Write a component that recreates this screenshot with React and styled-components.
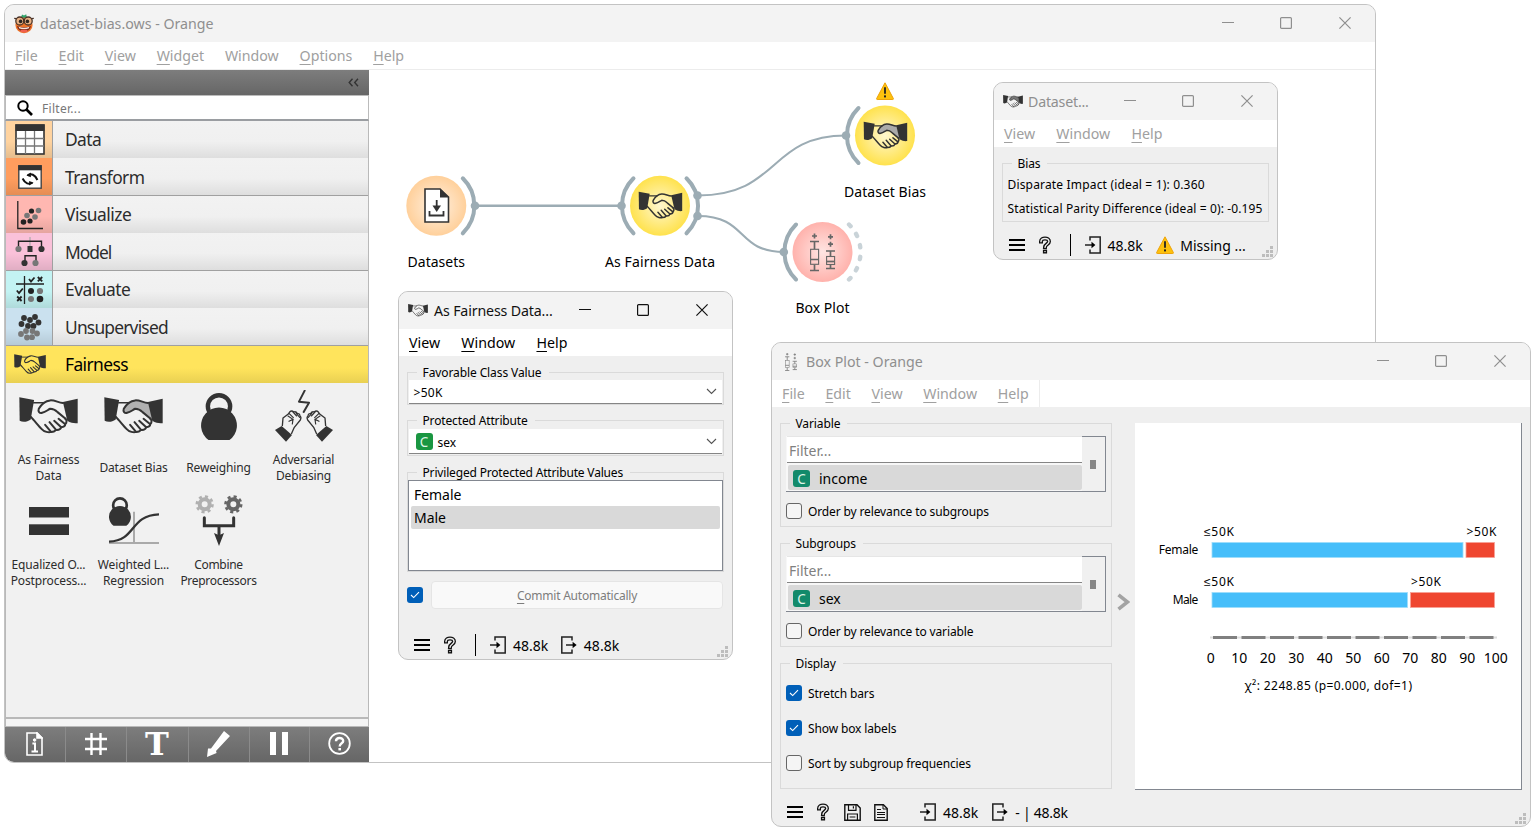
import React from "react";
import styled, { createGlobalStyle, css } from "styled-components";

const GlobalStyle = createGlobalStyle`
  * { box-sizing: border-box; }
  html, body { margin: 0; padding: 0; background: #fff; }
  body { width: 1533px; height: 830px; overflow: hidden; font-family: "Noto Sans", "Open Sans", sans-serif; color: #000; }
`;

/* ---------- window chrome ---------- */

const Desktop = styled.main`
  position: relative;
  width: 1533px;
  height: 830px;
  overflow: hidden;
`;

const WindowFrame = styled.section`
  position: absolute;
  left: ${(p) => p.$x}px;
  top: ${(p) => p.$y}px;
  width: ${(p) => p.$w}px;
  height: ${(p) => p.$h}px;
  display: flex;
  flex-direction: column;
  border: 1px solid #c3c3c3;
  border-radius: 10px;
  background: #efefef;
  overflow: hidden;
`;

const TitleBar = styled.header`
  flex: none;
  height: 37px;
  display: flex;
  align-items: center;
  padding: 0 1px 0 9px;
  background: #f3f3f3;
  color: ${(p) => (p.$active ? "#111" : "#8f8f8f")};
`;

const TitleIcon = styled.span`
  width: 20px;
  height: 20px;
  display: flex;
  align-items: center;
  justify-content: center;
  margin-right: ${(p) => p.$mr ?? 6}px;
`;

const TitleText = styled.h1`
  flex: 1;
  margin: 0;
  font-size: 14.2px;
  font-weight: 400;
  line-height: 20px;
  white-space: nowrap;
  letter-spacing: ${(p) => p.$ls || 0}px;
`;

const TitleButton = styled.span`
  width: 58.5px;
  height: 37px;
  padding-bottom: 1px;
  display: flex;
  align-items: center;
  justify-content: center;
`;

const MenuBar = styled.nav`
  flex: none;
  height: ${(p) => p.$h || 27}px;
  display: flex;
  background: #fff;
  border-bottom: ${(p) => (p.$line ? "1px solid #ececec" : "none")};
`;

const MenuGroup = styled.div`
  display: flex;
  align-items: center;
  gap: ${(p) => p.$gap}px;
  padding: 0 10px;
  border-right: ${(p) => (p.$divided ? "1px solid #ececec" : "none")};
`;

const MenuItem = styled.span`
  font-size: 14.2px;
  line-height: 20px;
  color: ${(p) => (p.$active ? "#000" : "#a0a0a0")};
`;

const Mnemonic = styled.span`
  text-decoration: underline;
  text-decoration-thickness: 1px;
  text-underline-offset: 3px;
`;

function WindowButtons() {
  return (
    <>
      <TitleButton>
        <svg width="12" height="12" stroke="currentColor"><path d="M0 5.5H12" /></svg>
      </TitleButton>
      <TitleButton>
        <svg width="12" height="12" stroke="currentColor" fill="none" strokeWidth="1.2"><rect x="0.6" y="0.6" width="10.8" height="10.8" rx="1" /></svg>
      </TitleButton>
      <TitleButton>
        <svg width="12" height="12" stroke="currentColor" strokeWidth="1.2"><path d="M0.4 0.4L11.6 11.6M11.6 0.4L0.4 11.6" /></svg>
      </TitleButton>
    </>
  );
}

function Menus({ items, active, divided, h, line, plain, gap }) {
  return (
    <MenuBar $h={h} $line={line}>
      <MenuGroup $divided={divided} $gap={gap}>
        {items.map((m) => (
          <MenuItem key={m} $active={active}>
            {m === plain ? m : <><Mnemonic>{m[0]}</Mnemonic>{m.slice(1)}</>}
          </MenuItem>
        ))}
      </MenuGroup>
    </MenuBar>
  );
}

/* ---------- icons ---------- */

function HandshakeArt({ shade, ink = "#333" }) {
  return (
    <g fill="none" stroke={ink} strokeWidth="6" strokeLinecap="round" strokeLinejoin="round">
      {shade && (
        <path d="M132 17C115 15 106 8 92 9C80 10 66 20 58 34C55 42 60 48 68 46C78 44 84 38 92 34C102 34 108 38 114 44L140 68L144 62Z" fill={shade} stroke="none" />
      )}
      <path d="M0 0L44 8L34 66C22 75 9 74 1 70Z" fill={ink} stroke="none" />
      <path d="M174 4L130 14L143 70C154 77 165 78 174 77Z" fill={ink} stroke="none" />
      <path d="M43 16H74" strokeWidth="5" />
      <path d="M130 17C115 15 105 8 92 9C80 10 66 20 58 34C55 42 60 48 68 46C78 44 84 38 92 34C102 34 108 38 114 44L138 64" />
      <path d="M34 58C42 66 58 86 66 94C74 103 88 106 95 103C101 103 107 101 109 97C117 98 123 95 125 89C132 89 137 85 137 79C142 76 142 68 137 64" />
      <path d="M77 82L94 102M90 74L109 96M104 70L125 89M117 64L137 80" />
    </g>
  );
}

function Handshake({ w, shade, ink }) {
  return (
    <svg width={w} height={w * 0.632} viewBox="-1 -1 176 111">
      <HandshakeArt shade={shade} ink={ink} />
    </svg>
  );
}

function BoxPlotArt({ color }) {
  return (
    <g fill="none" stroke={color} strokeWidth="1.7">
      <path d="M5.5 0V5M3 2.5H8M1 8H10M5.5 8V15.5M5.5 31V36.5M1 37H10" />
      <rect x="1.6" y="15.8" width="8" height="15" strokeWidth="1.1" />
      <path d="M1.5 26H9.5M21.5 0.8V5.8M19 3.3H24M21.5 8.2V13.2M19 10.7H24M17 17.5H26M21.5 17.5V22.8M21.5 31V35M17 35H26" />
      <rect x="17.6" y="23" width="8" height="8" strokeWidth="1.1" />
      <path d="M17.5 28H25.5" />
    </g>
  );
}

function OrangeLogo() {
  return (
    <svg width="20" height="20" viewBox="0 0 20 20">
      <ellipse cx="10" cy="11" rx="8.6" ry="8.2" fill="#ee7228" />
      <path d="M7.2 3L8 0.5L10 1.5L12.2 0.3L12.8 3L10 4Z" fill="#2fa36b" />
      <circle cx="5.8" cy="7" r="4" fill="#e9b184" stroke="#4a3428" strokeWidth="1.3" />
      <circle cx="14.2" cy="7" r="4" fill="#e9b184" stroke="#4a3428" strokeWidth="1.3" />
      <path d="M0.2 4.4L2.6 4.6M17.4 4.6L19.8 4.4M9 6.4H11" stroke="#4a3428" strokeWidth="1.3" />
      <circle cx="6.6" cy="7.4" r="1.8" fill="#2e2520" />
      <circle cx="13.4" cy="7.4" r="1.8" fill="#2e2520" />
      <path d="M3 12C7 13.6 13 13.6 17 12C16 16.2 13 17.6 10 17.6C7 17.6 4 16.2 3 12Z" fill="#7a2a1c" />
      <path d="M4.6 12.8C8 14 12 14 15.4 12.8L14.6 14.4C12 15.2 8 15.2 5.4 14.4Z" fill="#f6e6dc" />
      <ellipse cx="10" cy="17" rx="3.6" ry="1.4" fill="#f0604f" />
    </svg>
  );
}

function WarningArt() {
  return (
    <>
      <path d="M9 0.8L17.4 16.6Q17.6 17.4 16.8 17.5H1.2Q0.4 17.4 0.6 16.6Z" fill="#fdc10d" stroke="#eda30b" strokeWidth="1" strokeLinejoin="round" />
      <path d="M9 5.2V11.8" stroke="#222" strokeWidth="1.8" />
      <rect x="8" y="13.4" width="2" height="2" fill="#222" />
    </>
  );
}

const HamburgerIcon = () => (
  <svg width="16" height="14" stroke="#000" strokeWidth="2.1"><path d="M0 2H16M0 7H16M0 12H16" /></svg>
);

const HelpIcon = () => (
  <svg width="14" height="18" viewBox="0 0 14 18" fill="none">
    <path d="M3 5.6C3 1.4 11 1.4 11 5.6C11 8.2 7.2 8.2 7 11.2" stroke="#111" strokeWidth="4" strokeLinecap="square" />
    <path d="M3 5.6C3 1.4 11 1.4 11 5.6C11 8.2 7.2 8.2 7 11.2" stroke="#efefef" strokeWidth="1.4" strokeLinecap="square" />
    <rect x="5.6" y="14.4" width="2.8" height="2.4" fill="#efefef" stroke="#111" strokeWidth="1.4" />
  </svg>
);

const InputIcon = () => (
  <svg width="16" height="18" fill="none" stroke="#222" strokeWidth="1.5">
    <path d="M5 4.5V1H15.2V17H5V13.5" />
    <path d="M0 9H8" />
    <path d="M6.5 5.8L10.4 9L6.5 12.2Z" fill="#000" stroke="none" />
  </svg>
);

const OutputIcon = () => (
  <svg width="16" height="18" fill="none" stroke="#222" strokeWidth="1.5">
    <path d="M11 4.5V1H0.8V17H11V13.5" />
    <path d="M5 9H13" />
    <path d="M11.6 5.8L15.6 9L11.6 12.2Z" fill="#000" stroke="none" />
  </svg>
);

const SaveIcon = () => (
  <svg width="17" height="17" fill="none" stroke="#111" strokeWidth="1.4">
    <path d="M0.8 0.8H13L16.2 4V16.2H0.8Z" />
    <path d="M4.5 1V6.4H12V1M9.4 2.2V4.6M3.6 16V10H13.4V16M5.6 13H11.4" strokeWidth="1.2" />
  </svg>
);

const ReportIcon = () => (
  <svg width="14" height="17" fill="none" stroke="#111" strokeWidth="1.4">
    <path d="M0.8 0.8H9.4L13.2 4.6V16.2H0.8Z" />
    <path d="M9 1V5H13M3 5.5H7M3 8.5H11M3 10.5H11M3 13.5H11" strokeWidth="1" />
  </svg>
);

const GripIcon = () => (
  <svg width="12" height="12" fill="#bdbdbd">
    <path d="M8 0h3v3h-3zM4 4h3v3h-3zM8 4h3v3h-3zM0 8h3v3h-3zM4 8h3v3h-3zM8 8h3v3h-3z" />
  </svg>
);

/* ---------- form parts ---------- */

const Group = styled.fieldset`
  min-width: 0;
  height: ${(p) => p.$h}px;
  margin: 0 0 ${(p) => p.$gap || 0}px;
  padding: ${(p) => p.$top || 0}px ${(p) => p.$side || 0}px 0;
  border: 1px solid #dadada;
`;

const GroupTitle = styled.legend`
  height: 16px;
  margin-left: ${(p) => 8.5 - (p.$inset || 0)}px;
  padding: 0 7px 0 6px;
  font-size: 12px;
  line-height: 18px;
  letter-spacing: ${(p) => p.$ls ?? -0.1}px;
`;

const Combo = styled.div`
  height: ${(p) => p.$h}px;
  margin: ${(p) => p.$mt || 0}px 1px 0;
  padding: 0 5px 0 ${(p) => p.$left || 4.5}px;
  display: flex;
  align-items: center;
  gap: 5px;
  background: #fff;
  border-bottom: 1px solid #858585;
  font-size: 12px;
  letter-spacing: ${(p) => p.$ls || 0}px;
`;

const ComboText = styled.span`
  flex: 1;
  padding-top: 2px;
`;

const ChevronDown = () => (
  <svg width="11" height="7" fill="none" stroke="#555" strokeWidth="1.1"><path d="M1 1L5.5 5.5L10 1" /></svg>
);

const TypeBadge = styled.span`
  width: 17px;
  height: 17px;
  border-radius: 3px;
  background: ${(p) => p.$color};
  color: #dff5e8;
  font-size: 13.5px;
  line-height: 18px;
  text-align: center;
`;

const CheckMark = styled.span`
  flex: none;
  width: 16px;
  height: 16px;
  display: flex;
  align-items: center;
  justify-content: center;
  border-radius: 3px;
  ${(p) => p.$on
    ? css`background: #005fb8;`
    : css`background: #f5f5f5; border: 1px solid #666;`}
`;

const CheckRow = styled.label`
  height: 16px;
  display: flex;
  align-items: center;
  gap: 6px;
  margin-top: ${(p) => p.$mt || 0}px;
`;

const CheckText = styled.span`
  padding-top: 1px;
  font-size: 12px;
  line-height: 16px;
  letter-spacing: -0.13px;
  white-space: nowrap;
`;

function Check({ on }) {
  return (
    <CheckMark $on={on}>
      {on && <svg width="10" height="8" fill="none" stroke="#fff" strokeWidth="1.1"><path d="M1 4L3.7 6.6L9 1.2" /></svg>}
    </CheckMark>
  );
}

const StatusBar = styled.footer`
  flex: none;
  height: ${(p) => p.$h}px;
  display: flex;
  align-items: center;
  padding-left: ${(p) => p.$left}px;
  font-size: 14px;
  line-height: 20px;
`;

const StatusItem = styled.span`
  display: flex;
  align-items: center;
  gap: ${(p) => p.$gap || 0}px;
  margin-right: ${(p) => p.$mr || 0}px;
  white-space: nowrap;
`;

const StatusText = styled.span`
  padding-top: 1px;
  letter-spacing: ${(p) => p.$ls || 0}px;
`;

const StatusDivider = styled.span`
  width: 1px;
  height: 22px;
  margin-right: ${(p) => p.$mr}px;
  background: #000;
`;

const Grip = styled.span`
  margin-left: auto;
  align-self: flex-end;
  display: flex;
  padding: 0 3px 1px 0;
`;

/* ---------- sidebar ---------- */

const MainBody = styled.div`
  flex: 1;
  min-height: 0;
  display: flex;
  background: #fff;
`;

const Sidebar = styled.aside`
  flex: none;
  width: 364px;
  display: flex;
  flex-direction: column;
`;

const SidebarHeader = styled.div`
  height: 25px;
  display: flex;
  align-items: center;
  justify-content: flex-end;
  padding-right: 10px;
  background: linear-gradient(#7d7d7d, #666);
`;

const FilterRow = styled.div`
  height: 26px;
  display: flex;
  align-items: center;
  gap: 9px;
  padding-left: 11px;
  background: #fff;
  border: 1px solid #bbb;
  border-bottom: 2px solid #9a9da1;
`;

const FilterText = styled.span`
  padding-top: 1px;
  font-size: 12px;
  letter-spacing: 0.3px;
  color: #777;
`;

const PanelBody = styled.div`
  flex: 1;
  border: solid #b9b9b9;
  border-width: 0 1px 2px;
  background: #f1f1f1;
`;

const Category = styled.div`
  height: ${(p) => (p.$ruled ? 38 : 37)}px;
  display: flex;
  border-bottom: ${(p) => (p.$ruled ? "1px solid #a0a0a0" : "none")};
  background: ${(p) => (p.$open
    ? "linear-gradient(#ffe45c 60%, #e9d052)"
    : "linear-gradient(#f2f2f2, #f0f0f0 55%, #dedede)")};
`;

const CategoryIcon = styled.span`
  width: 47px;
  padding-left: ${(p) => (p.$open ? 0 : 2)}px;
  display: flex;
  align-items: center;
  justify-content: center;
  border-right: ${(p) => (p.$open ? "0" : "1px solid #a0a0a0")};
  background: ${(p) => (p.$open ? "none" : `linear-gradient(transparent 55%, rgba(0,0,0,.1)), ${p.$color}`)};
`;

const CategoryName = styled.span`
  padding-left: 12px;
  font-size: 17.4px;
  line-height: ${(p) => (p.$ruled ? 38 : 37)}px;
  letter-spacing: ${(p) => p.$ls}px;
  color: ${(p) => (p.$open ? "#000" : "#2c2c2c")};
`;

const WidgetGrid = styled.div`
  display: grid;
  grid-template-columns: repeat(4, 85px);
  grid-auto-rows: 104.7px;
`;

const WidgetCell = styled.div`
  display: flex;
  flex-direction: column;
  align-items: center;
`;

const WidgetIcon = styled.span`
  height: 69px;
  display: flex;
  align-items: center;
  padding-bottom: 3px;
`;

const WidgetName = styled.span`
  height: 32px;
  display: flex;
  align-items: center;
  text-align: center;
  white-space: pre;
  font-size: 12px;
  line-height: 16px;
  letter-spacing: ${(p) => p.$ls || -0.14}px;
  color: #2c2c2c;
`;

const PanelStrip = styled.div`
  height: 8px;
  background: #f4f4f4;
  border: 1px solid #b9b9b9;
  border-top: 0;
`;

const ToolStrip = styled.div`
  height: 35px;
  display: grid;
  grid-template-columns: 61px 61px 62px 61px 60px 1fr;
  background: linear-gradient(#7d7d7d, #666);
`;

const Tool = styled.span`
  display: flex;
  align-items: center;
  justify-content: center;
  padding: 0 1px 2px 0;
  border-right: 1px solid #8b8b8b;
  &:last-child { border-right: 0; }
`;

const ToolGlyph = styled.b`
  color: #fff;
  font: 700 32px/30px "DejaVu Serif", serif;
`;

const DataIcon = () => (
  <svg width="30" height="31" viewBox="0 0 30 31">
    <rect x="1" y="1" width="28" height="29" fill="#fff" stroke="#333" strokeWidth="1.6" />
    <rect x="0.5" y="0.5" width="29" height="6.5" fill="#333" />
    <path d="M10.5 7V30M19.5 7V30M1 14.5H29M1 22H29" stroke="#777" strokeWidth="1.3" />
  </svg>
);
const TransformIcon = () => (
  <svg width="24" height="24" viewBox="0 0 24 24">
    <rect x="0.8" y="0.8" width="22.4" height="22.4" fill="#fff" stroke="#444" strokeWidth="1.4" />
    <rect x="0.3" y="0.3" width="23.4" height="5" fill="#333" />
    <path d="M9.5 10.5C13 8 17 9.5 19.4 15M14.5 17.5C11 20 7 18.5 4.6 13.5" fill="none" stroke="#111" strokeWidth="2" />
    <path d="M8.4 10.4L13 7.4L12.8 12.2ZM15.6 17.8L11 20.6L11.2 16Z" fill="#111" />
  </svg>
);
const VisualizeIcon = () => (
  <svg width="28" height="30" viewBox="0 0 28 30">
    <path d="M1.8 1V28.5H27" fill="none" stroke="#222" strokeWidth="1.3" />
    <g fill="#222"><circle cx="7.5" cy="22" r="2.8" /><circle cx="14" cy="21" r="2.6" /><circle cx="15.5" cy="11" r="2.6" /></g>
    <g fill="#777"><circle cx="11" cy="15.5" r="2.8" /><circle cx="19" cy="17" r="2.8" /><circle cx="22.5" cy="10.5" r="2.8" /></g>
  </svg>
);
const ModelIcon = () => (
  <svg width="30" height="30" viewBox="0 0 30 30">
    <path d="M15 0V12" stroke="#aaa" strokeWidth="1.2" />
    <path d="M3.5 10V4.2H26.5V10M10 24V18.8H21V24" fill="none" stroke="#222" strokeWidth="1.4" />
    <g fill="#333"><circle cx="26.5" cy="12" r="3.1" /><circle cx="9.5" cy="26" r="3.1" /><rect x="12.5" y="9" width="5" height="6" /></g>
    <g fill="#777"><circle cx="3.5" cy="12" r="3.1" /><circle cx="20.5" cy="26" r="3.1" /></g>
  </svg>
);
const EvaluateIcon = () => (
  <svg width="30" height="30" viewBox="0 0 30 30" fill="none" stroke="#222" strokeWidth="1.3">
    <path d="M9.5 1V29M1 9H29" />
    <path d="M14 4L16 6.5L19.5 2.5M1.8 15.5L4 18L7.8 13.5M22.8 2L27.2 6.4M27.2 2L22.8 6.4M2.2 21.5L6.6 26M6.6 21.5L2.2 26" strokeWidth="1.8" />
    <g stroke="none"><circle cx="16" cy="16" r="3" fill="#222" /><circle cx="25" cy="24" r="3.3" fill="#222" /><circle cx="25" cy="16" r="3.1" fill="#777" /><circle cx="16" cy="24" r="3" fill="#777" /></g>
  </svg>
);
const UnsupervisedIcon = () => (
  <svg width="24" height="28" viewBox="0 0 24 28">
    <g fill="#333">{[[6, 5], [17, 4], [3.5, 11], [12, 7], [20.5, 9.5], [10, 13], [15.5, 13]].map(([x, y]) => <circle key={x} cx={x} cy={y} r="2.9" />)}</g>
    <g fill="#777">{[[3, 21], [8, 18], [14.5, 18], [19, 20.5], [9, 24.5], [14, 24.2]].map(([x, y]) => <circle key={x} cx={x} cy={y} r="2.9" />)}</g>
  </svg>
);

const KettlebellArt = () => (
  <>
    <circle cx="53" cy="39.5" r="33" fill="none" stroke="#333" strokeWidth="13" />
    <path d="M22 139A53 53 0 1 1 84 139Z" fill="#333" />
  </>
);
const ReweighingIcon = () => (
  <svg width="36" height="47" viewBox="0 0 106 139"><KettlebellArt /></svg>
);

const FistArt = () => (
  <g>
    <path d="M0 120L20 108L51 135L33 155Z" fill="#333" />
    <path d="M22 108L24 84L40 72L44 66Q50 60 56 66Q63 63 67 71Q74 69 75 78Q80 82 76 90L58 112L49 132" fill="none" stroke="#333" strokeWidth="4" strokeLinejoin="round" />
    <path d="M42 70L55 83M54 66L65 78M64 70L74 82M39 78L54 88L42 94M54 88L52 102" fill="none" stroke="#333" strokeWidth="3.5" strokeLinecap="round" />
  </g>
);
const AdversarialIcon = () => (
  <svg width="58" height="52" viewBox="0 0 174 156">
    <path d="M89 2L72 35L102 38L86 66" fill="none" stroke="#333" strokeWidth="6" strokeLinejoin="round" strokeLinecap="round" />
    <FistArt />
    <g transform="matrix(-1 0 0 1 174 0)"><FistArt /></g>
  </svg>
);
const EqualIcon = () => (
  <svg width="40" height="28" fill="#333"><rect width="40" height="10.5" /><rect y="17.3" width="40" height="10.7" /></svg>
);
const WeightedIcon = () => (
  <svg width="50" height="48" viewBox="0 0 150 144">
    <path d="M0 138H150M75 44V138" stroke="#aaa" strokeWidth="6" />
    <path d="M0 134C84 130 60 56 150 52" fill="none" stroke="#333" strokeWidth="7" />
    <g transform="scale(.62)"><KettlebellArt /></g>
  </svg>
);
const Gear = ({ x, color }) => (
  <g transform={`translate(${x} 28)`} fill="none" stroke={color}>
    <circle r="15" strokeWidth="12" />
    <circle r="23.5" strokeWidth="8" strokeDasharray="9.2 9.26" />
  </g>
);
const CombineIcon = () => (
  <svg width="48" height="52" viewBox="0 0 144 156">
    <Gear x={29} color="#b0b0b0" />
    <Gear x={115} color="#666" />
    <path d="M28 68V92H116V68M72 92V125" fill="none" stroke="#333" strokeWidth="9" strokeLinecap="round" />
    <path d="M57 114L72 121L87 114L72 153Z" fill="#333" />
  </svg>
);

const categories = [
  { name: "Data", color: "#ffd39f", icon: <DataIcon />, ls: -0.6 },
  { name: "Transform", color: "#ff9d5e", icon: <TransformIcon />, ruled: true, ls: -0.55 },
  { name: "Visualize", color: "#ffb7b1", icon: <VisualizeIcon />, ls: -0.5 },
  { name: "Model", color: "#fac1d9", icon: <ModelIcon />, ruled: true, ls: -1 },
  { name: "Evaluate", color: "#c3f3f3", icon: <EvaluateIcon />, ls: -0.5 },
  { name: "Unsupervised", color: "#cae1ef", icon: <UnsupervisedIcon />, ruled: true, ls: -0.8 },
  { name: "Fairness", open: true, icon: <Handshake w={32} />, ls: -0.6 },
];

const widgets = [
  { name: "As Fairness\nData", icon: <Handshake w={59} /> },
  { name: "Dataset Bias", icon: <Handshake w={59} shade="#b0b0b0" /> },
  { name: "Reweighing", icon: <ReweighingIcon /> },
  { name: "Adversarial\nDebiasing", icon: <AdversarialIcon /> },
  { name: "Equalized O...\nPostprocess...", icon: <EqualIcon /> },
  { name: "Weighted L...\nRegression", icon: <WeightedIcon /> },
  { name: "Combine\nPreprocessors", icon: <CombineIcon />, ls: -0.3 },
];

function ToolIcons() {
  const s = { fill: "none", stroke: "#fff" };
  return (
    <ToolStrip>
      <Tool>
        <svg width="17" height="24" {...s} strokeWidth="1.6">
          <path d="M1 1H11L16 6V23H1Z" /><path d="M11 1V6H16Z" fill="#fff" />
          <path d="M6.4 11.5H9V19M5.5 19.4H12" strokeWidth="2" /><circle cx="8.6" cy="8" r="1.3" fill="#fff" strokeWidth="1" />
        </svg>
      </Tool>
      <Tool><svg width="24" height="24" {...s} strokeWidth="2.4"><path d="M7.5 1V23M16.5 1V23M1 7H23M1 17H23" /></svg></Tool>
      <Tool><ToolGlyph>T</ToolGlyph></Tool>
      <Tool><svg width="23" height="26" fill="#fff"><path d="M17 0L23 5L9 20L9.6 22L0 26L1 17.5L4 17.6Z" /></svg></Tool>
      <Tool><svg width="18" height="23" fill="#fff"><rect width="6" height="23" /><rect x="12" width="6" height="23" /></svg></Tool>
      <Tool>
        <svg width="23" height="23" {...s} strokeWidth="1.8">
          <circle cx="11.5" cy="11.5" r="10.3" /><path d="M8 9.2C8 5 15.2 5 15.2 9C15.2 11.4 11.7 11.2 11.7 14.4" strokeWidth="2.4" />
          <path d="M10.4 17.2H13" strokeWidth="2.4" />
        </svg>
      </Tool>
    </ToolStrip>
  );
}

/* ---------- workflow canvas ---------- */

const CanvasArea = styled.div`
  flex: 1;
  min-width: 0;
  overflow: hidden;
`;

const wire = "#9cacb4";
const arc = (x, y, side) => {
  const dx = 26.5 * side;
  return `M${x + dx} ${y - 27.5}A38.5 38.5 0 0 ${side > 0 ? 1 : 0} ${x + dx} ${y + 27.5}`;
};

function Node({ x, y, fill, label, w, left, right, dashed, children }) {
  return (
    <g>
      <circle cx={x} cy={y} r="30" fill={`url(#${fill})`} />
      <g fill="none" stroke={wire} strokeWidth="4" strokeLinecap="round">
        {left && <path d={arc(x, y, -1)} />}
        {right && <path d={arc(x, y, 1)} />}
        {dashed && <path d={arc(x, y, 1)} stroke="#c9d3d8" strokeWidth="4.4" strokeDasharray="2.4 9.4" />}
      </g>
      {children}
      <text x={x} y={y + 61} fontSize="14" textAnchor="middle" textLength={w}>{label}</text>
    </g>
  );
}

function Workflow() {
  return (
    <svg width="1006" height="692" viewBox="369 70 1006 692" fontFamily="'Noto Sans', sans-serif">
      <defs>
        <radialGradient id="peach"><stop offset="0" stopColor="#fff1e2" /><stop offset="1" stopColor="#ffd09b" /></radialGradient>
        <radialGradient id="yellow"><stop offset="0" stopColor="#fff7cf" /><stop offset="1" stopColor="#ffe24d" /></radialGradient>
        <radialGradient id="rose"><stop offset="0" stopColor="#ffe5e3" /><stop offset="1" stopColor="#ffb2ac" /></radialGradient>
      </defs>
      <g fill="none" stroke={wire} strokeWidth="2.1">
        <path d="M475 205.7H621" strokeWidth="2.4" />
        <path d="M698 195.5C780 195.5 768 135.5 846 135.5" />
        <path d="M698 216C748 216 736 252 784 252" />
      </g>
      <Node x={436.3} y={205.8} fill="peach" label="Datasets" w={57.5} right>
        <path d="M425 189H440L448.5 197V222H425Z" fill="#fff" stroke="#333" strokeWidth="1.6" />
        <path d="M440 188.5L449 197.5H440Z" fill="#333" />
        <path d="M436.7 200V208M429.5 211V215.5H443.5V211" fill="none" stroke="#333" strokeWidth="1.8" />
        <path d="M432.5 205.5H441L436.7 212Z" fill="#333" />
      </Node>
      <Node x={660} y={205.8} fill="yellow" label="As Fairness Data" w={110} left right>
        <g transform="translate(638.7 191.8) scale(.25)"><HandshakeArt /></g>
      </Node>
      <Node x={885} y={135.5} fill="yellow" label="Dataset Bias" w={82} left>
        <g transform="translate(863.7 121.8) scale(.25)"><HandshakeArt shade="#aaa" /></g>
      </Node>
      <Node x={822.5} y={252} fill="rose" label="Box Plot" w={54} left dashed>
        <g transform="translate(809 233.5)"><BoxPlotArt color="#666" /></g>
      </Node>
      <g fill={wire}>
        {[[475, 205.8], [621.5, 205.8], [697.5, 195.5], [697.5, 216], [846, 135.5], [783.8, 252]].map(([x, y]) => (
          <circle key={`${x}-${y}`} cx={x} cy={y} r="4.3" />
        ))}
      </g>
      <g transform="translate(876 82)"><WarningArt /></g>
    </svg>
  );
}

/* ---------- windows ---------- */

function MainWindow() {
  return (
    <WindowFrame $x={4} $y={4} $w={1372} $h={759}>
      <TitleBar>
        <TitleIcon><OrangeLogo /></TitleIcon>
        <TitleText>dataset-bias.ows - Orange</TitleText>
        <WindowButtons />
      </TitleBar>
      <Menus items={["File", "Edit", "View", "Widget", "Window", "Options", "Help"]} plain="Window" h={28} gap={20.83} line />
      <MainBody>
        <Sidebar>
          <SidebarHeader>
            <svg width="11" height="9" fill="none" stroke="#333" strokeWidth="1.4"><path d="M4.5 0.8L1.2 4.5L4.5 8.2M10 0.8L6.7 4.5L10 8.2" /></svg>
          </SidebarHeader>
          <FilterRow>
            <svg width="16" height="16" fill="none" stroke="#000"><circle cx="6" cy="6" r="4.7" strokeWidth="2" /><path d="M9.5 9.5L15 15" strokeWidth="2.6" /></svg>
            <FilterText>Filter...</FilterText>
          </FilterRow>
          <PanelBody>
            {categories.map((c) => (
              <Category key={c.name} $ruled={c.ruled} $open={c.open}>
                <CategoryIcon $color={c.color} $open={c.open}>{c.icon}</CategoryIcon>
                <CategoryName $ruled={c.ruled} $open={c.open} $ls={c.ls}>{c.name}</CategoryName>
              </Category>
            ))}
            <WidgetGrid>
              {widgets.map((w) => (
                <WidgetCell key={w.name}>
                  <WidgetIcon>{w.icon}</WidgetIcon>
                  <WidgetName $ls={w.ls}>{w.name}</WidgetName>
                </WidgetCell>
              ))}
            </WidgetGrid>
          </PanelBody>
          <PanelStrip />
          <ToolIcons />
        </Sidebar>
        <CanvasArea><Workflow /></CanvasArea>
      </MainBody>
    </WindowFrame>
  );
}

const DialogBody = styled.div`
  flex: 1;
  padding: 8px 8px 0;
`;

const ValueList = styled.div`
  height: 91px;
  padding: 2px;
  background: #fff;
  border: 1px solid #828790;
`;

const ValueItem = styled.div`
  height: 23px;
  padding-left: 3px;
  border-radius: 2px;
  background: ${(p) => (p.$selected ? "#d9d9d9" : "none")};
  font-size: 14px;
  line-height: 23px;
  letter-spacing: -0.05px;
`;

const CommitRow = styled.div`
  display: flex;
  align-items: center;
  gap: 8px;
  margin: 9px 1px 0 0;
`;

const CommitButton = styled.button`
  flex: 1;
  height: 28px;
  padding: 0;
  border: 1px solid #e5e5e5;
  border-radius: 4px;
  background: #f9f9f9;
  color: #7d7d7d;
  font-family: inherit;
  font-size: 12px;
  letter-spacing: -0.23px;
`;

function FairnessWindow() {
  return (
    <WindowFrame $x={398} $y={291} $w={335} $h={369}>
      <TitleBar $active>
        <TitleIcon><Handshake w={20} /></TitleIcon>
        <TitleText $ls={-0.14}>As Fairness Data...</TitleText>
        <WindowButtons />
      </TitleBar>
      <Menus items={["View", "Window", "Help"]} active gap={21.3} />
      <DialogBody>
        <Group $h={41} $gap={7}>
          <GroupTitle>Favorable Class Value</GroupTitle>
          <Combo $h={24} $ls={0.3}><ComboText>&gt;50K</ComboText><ChevronDown /></Combo>
        </Group>
        <Group $h={44} $gap={8}>
          <GroupTitle $ls={-0.15}>Protected Attribute</GroupTitle>
          <Combo $h={25} $mt={1} $left={6.5}><TypeBadge $color="#1a9641">C</TypeBadge><ComboText>sex</ComboText><ChevronDown /></Combo>
        </Group>
        <Group $h={108}>
          <GroupTitle $ls={-0.17}>Privileged Protected Attribute Values</GroupTitle>
          <ValueList>
            <ValueItem>Female</ValueItem>
            <ValueItem $selected>Male</ValueItem>
          </ValueList>
        </Group>
        <CommitRow>
          <Check on />
          <CommitButton><Mnemonic>C</Mnemonic>ommit Automatically</CommitButton>
        </CommitRow>
      </DialogBody>
      <StatusBar $h={28} $left={15}>
        <StatusItem $mr={13}><HamburgerIcon /></StatusItem>
        <StatusItem $mr={18}><HelpIcon /></StatusItem>
        <StatusDivider $mr={14} />
        <StatusItem $gap={7} $mr={13}><InputIcon /><StatusText>48.8k</StatusText></StatusItem>
        <StatusItem $gap={6.6}><OutputIcon /><StatusText>48.8k</StatusText></StatusItem>
        <Grip><GripIcon /></Grip>
      </StatusBar>
    </WindowFrame>
  );
}

const BiasLine = styled.p`
  margin: 0;
  font-size: 12px;
  line-height: 24px;
  letter-spacing: ${(p) => p.$ls}px;
  white-space: nowrap;
`;

function BiasWindow() {
  return (
    <WindowFrame $x={993} $y={82} $w={285} $h={178}>
      <TitleBar>
        <TitleIcon $mr={5}><Handshake w={20} shade="#777" /></TitleIcon>
        <TitleText $ls={-0.2}>Dataset...</TitleText>
        <WindowButtons />
      </TitleBar>
      <Menus items={["View", "Window", "Help"]} gap={21.3} />
      <DialogBody>
        <Group $h={67} $top={2} $side={4.5}>
          <GroupTitle $inset={4.5}>Bias</GroupTitle>
          <BiasLine $ls={0.17}>Disparate Impact (ideal = 1): 0.360</BiasLine>
          <BiasLine $ls={0.12}>Statistical Parity Difference (ideal = 0): -0.195</BiasLine>
        </Group>
      </DialogBody>
      <StatusBar $h={28} $left={15}>
        <StatusItem $mr={13}><HamburgerIcon /></StatusItem>
        <StatusItem $mr={18}><HelpIcon /></StatusItem>
        <StatusDivider $mr={14} />
        <StatusItem $gap={6.5} $mr={13.5}><InputIcon /><StatusText>48.8k</StatusText></StatusItem>
        <StatusItem $gap={6}><svg width="18" height="18"><WarningArt /></svg><StatusText>Missing ...</StatusText></StatusItem>
        <Grip><GripIcon /></Grip>
      </StatusBar>
    </WindowFrame>
  );
}

const PlotBody = styled.div`
  flex: 1;
  display: flex;
  padding: 8px 8px 0;
`;

const Controls = styled.div`
  flex: none;
  width: 332px;
`;

const VariableList = styled.div`
  height: 56px;
  display: grid;
  grid-template-columns: 296px 1fr;
  border: solid #828790;
  border-width: 0 1px 1px 0;
`;

const VariableMain = styled.div`
  display: flex;
  flex-direction: column;
  gap: 2px;
  padding-left: 1px;
  background: #f7f7f7;
`;

const VariableFilter = styled.div`
  height: 27px;
  padding-left: 2px;
  background: #fff;
  border-top: 1px solid #e6e6e6;
  border-bottom: 1px solid #858585;
  color: #808080;
  font-size: 14px;
  line-height: 27px;
`;

const VariableItem = styled.div`
  height: 25px;
  margin-left: 1px;
  padding: 2px 0 0 5px;
  display: flex;
  align-items: center;
  gap: 9px;
  border-radius: 2px;
  background: #d9d9d9;
  font-size: 14px;
`;

const ScrollTrack = styled.div`
  display: flex;
  align-items: center;
  justify-content: center;
  border-top: 1px solid #828790;
  padding-right: 2px;
  background: #f0f0f0;
`;

const ScrollThumb = styled.span`
  width: 6px;
  height: 9px;
  background: #868686;
`;

const Splitter = styled.div`
  width: 24px;
  padding-bottom: 10px;
  display: flex;
  align-items: center;
  justify-content: center;
`;

const PlotAreaWrap = styled.div`
  padding-top: 8px;
`;

const PlotArea = styled.div`
  width: 387px;
  height: 367px;
  background: #fff;
  border: solid #828790;
  border-width: 0 1px 1px 0;
  overflow: hidden;
`;

function VariablePicker({ title, value, check }) {
  return (
    <Group $h={112} $gap={8} $top={5} $side={5}>
      <GroupTitle $inset={5}>{title}</GroupTitle>
      <VariableList>
        <VariableMain>
          <VariableFilter>Filter...</VariableFilter>
          <VariableItem><TypeBadge $color="#128a6b">C</TypeBadge>{value}</VariableItem>
        </VariableMain>
        <ScrollTrack><ScrollThumb /></ScrollTrack>
      </VariableList>
      <CheckRow $mt={11}><Check /><CheckText>{check}</CheckText></CheckRow>
    </Group>
  );
}

function BoxPlotChart() {
  const bars = [
    { name: "Female", nameW: 39.5, y: 542.5, split: 1463, label: 1466.5 },
    { name: "Male", nameW: 25.5, y: 592.5, split: 1407.5, label: 1411 },
  ];
  return (
    <svg width="386" height="366" viewBox="1135 423 386 366" fontFamily="'Noto Sans', sans-serif" fontSize="12">
      {bars.map((b) => (
        <g key={b.name}>
          <text x="1204" y={b.y - 6.5} textLength="30">≤50K</text>
          <text x={b.label} y={b.y - 6.5} textLength="30">&gt;50K</text>
          <text x="1198.3" y={b.y + 11.5} textAnchor="end" textLength={b.nameW}>{b.name}</text>
          <rect x="1212" y={b.y} width={b.split - 1212} height="15" fill="#46befa" stroke="#9ddcfb" strokeWidth="0.8" />
          <rect x={b.split + 3} y={b.y} width={1494.5 - b.split - 3} height="15" fill="#ef4630" stroke="#f7a197" strokeWidth="0.8" />
        </g>
      ))}
      <path d="M1210 637.5H1497" stroke="#dedede" strokeWidth="2" />
      {[...Array(10)].map((_, i) => (
        <rect key={i} x={1213 + i * 28.5} y="636" width="24" height="3" fill="#808080" />
      ))}
      {[...Array(11)].map((_, i) => (
        <text key={i} x={1210.7 + i * 28.5} y="663" fontSize="14" textAnchor="middle">{i * 10}</text>
      ))}
      <text x="1244.5" y="690" textLength="167.5">χ²: 2248.85 (p=0.000, dof=1)</text>
    </svg>
  );
}

function BoxPlotWindow() {
  return (
    <WindowFrame $x={771} $y={342} $w={760} $h={485}>
      <TitleBar>
        <TitleIcon $mr={5}><svg width="14" height="18" viewBox="0 0 27 38"><BoxPlotArt color="#777" /></svg></TitleIcon>
        <TitleText>Box Plot - Orange</TitleText>
        <WindowButtons />
      </TitleBar>
      <Menus items={["File", "Edit", "View", "Window", "Help"]} divided gap={20.7} />
      <PlotBody>
        <Controls>
          <VariablePicker title="Variable" value="income" check="Order by relevance to subgroups" />
          <VariablePicker title="Subgroups" value="sex" check="Order by relevance to variable" />
          <Group $h={134} $top={14} $side={5}>
            <GroupTitle $inset={5}>Display</GroupTitle>
            <CheckRow><Check on /><CheckText>Stretch bars</CheckText></CheckRow>
            <CheckRow $mt={19}><Check on /><CheckText>Show box labels</CheckText></CheckRow>
            <CheckRow $mt={19}><Check /><CheckText>Sort by subgroup frequencies</CheckText></CheckRow>
          </Group>
        </Controls>
        <Splitter>
          <svg width="13" height="18" fill="none" stroke="#a3a3a3" strokeWidth="3.6"><path d="M1.5 1.8L10.5 9L1.5 16.2" /></svg>
        </Splitter>
        <PlotAreaWrap><PlotArea><BoxPlotChart /></PlotArea></PlotAreaWrap>
      </PlotBody>
      <StatusBar $h={28} $left={15}>
        <StatusItem $mr={13}><HamburgerIcon /></StatusItem>
        <StatusItem $mr={14}><HelpIcon /></StatusItem>
        <StatusItem $mr={13}><SaveIcon /></StatusItem>
        <StatusItem $mr={32}><ReportIcon /></StatusItem>
        <StatusItem $gap={7} $mr={14}><InputIcon /><StatusText>48.8k</StatusText></StatusItem>
        <StatusItem $gap={7}><OutputIcon /><StatusText $ls={-0.25}>- | 48.8k</StatusText></StatusItem>
        <Grip><GripIcon /></Grip>
      </StatusBar>
    </WindowFrame>
  );
}

export default function App() {
  return (
    <Desktop>
      <GlobalStyle />
      <MainWindow />
      <FairnessWindow />
      <BiasWindow />
      <BoxPlotWindow />
    </Desktop>
  );
}
